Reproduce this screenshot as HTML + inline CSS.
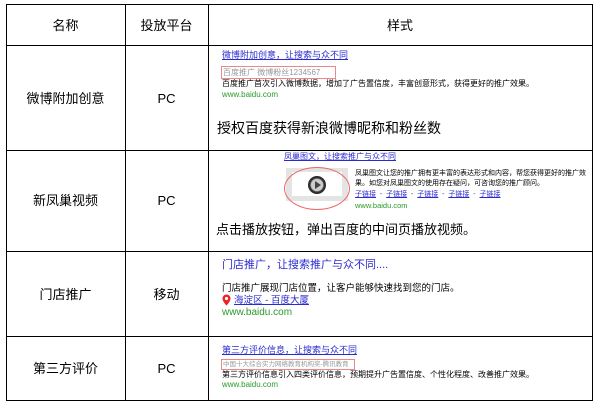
<!DOCTYPE html>
<html><head><meta charset="utf-8"><style>
*{margin:0;padding:0;box-sizing:border-box}
body{width:602px;height:407px;background:#fff;position:relative;overflow:hidden;font-family:"Liberation Sans","Noto Sans CJK SC",sans-serif;color:#000}
.h,.v{position:absolute;background:#000}
.h{height:1px;left:6px;width:587px}
.v{width:1px;top:4px;height:397px}
.t{position:absolute;white-space:nowrap;line-height:1}
.c{text-align:center}
.blue{color:#2a2ad0}
.s{font-size:8px}
.g{color:#2a9a2a}
.box{position:absolute;border:1px solid #e88;}
</style></head><body>
<div class="h" style="top:4px"></div>
<div class="h" style="top:45px"></div>
<div class="h" style="top:150px"></div>
<div class="h" style="top:251px"></div>
<div class="h" style="top:336px"></div>
<div class="h" style="top:400px"></div>
<div class="v" style="left:6px"></div>
<div class="v" style="left:125px"></div>
<div class="v" style="left:208px"></div>
<div class="v" style="left:592px"></div>

<div class="t c" style="left:6px;width:119px;top:19px;font-size:13px">名称</div>
<div class="t c" style="left:125px;width:83px;top:19px;font-size:13px">投放平台</div>
<div class="t c" style="left:208px;width:384px;top:19px;font-size:13px">样式</div>

<div class="t c" style="left:6px;width:119px;top:92px;font-size:13px">微博附加创意</div>
<div class="t c" style="left:125px;width:83px;top:92px;font-size:13px">PC</div>
<div class="t c" style="left:6px;width:119px;top:194px;font-size:13px">新凤巢视频</div>
<div class="t c" style="left:125px;width:83px;top:194px;font-size:13px">PC</div>
<div class="t c" style="left:6px;width:119px;top:288px;font-size:13px">门店推广</div>
<div class="t c" style="left:125px;width:83px;top:288px;font-size:13px">移动</div>
<div class="t c" style="left:6px;width:119px;top:362px;font-size:13px">第三方评价</div>
<div class="t c" style="left:125px;width:83px;top:362px;font-size:13px">PC</div>

<!-- row1 -->
<div class="t blue s" style="left:222px;top:51px;text-decoration:underline;font-size:9px">微博附加创意，让搜索与众不同</div>
<div class="box" style="left:221px;top:66px;width:115px;height:13px"></div>
<div class="t s" style="left:223px;top:69px;color:#999">百度推广 微博粉丝1234567</div>
<div class="t s" style="left:222px;top:80px">百度推广首次引入微博数据，增加了广告置信度，丰富创意形式，获得更好的推广效果。</div>
<div class="t s g" style="left:222px;top:91px">www.baidu.com</div>
<div class="t" style="left:217px;top:121px;font-size:14px">授权百度获得新浪微博昵称和粉丝数</div>

<!-- row2 -->
<div class="t blue s" style="left:284px;top:153px;text-decoration:underline">凤巢图文，让搜索推广与众不同</div>
<div style="position:absolute;left:286px;top:168px;width:62px;height:33px;background:#e4e4e4"></div>
<div style="position:absolute;left:292px;top:172px;width:50px;height:24px;background:#fff"></div>
<div style="position:absolute;left:284px;top:167px;width:66px;height:43px;border:1px solid #e66;border-radius:50%"></div>
<div style="position:absolute;left:308px;top:176px;width:18px;height:18px;border-radius:50%;background:radial-gradient(circle,#ccc 0 45%,#333 55%,#111)"></div>
<div style="position:absolute;left:315px;top:181px;width:0;height:0;border-left:6px solid #444;border-top:4px solid transparent;border-bottom:4px solid transparent"></div>
<div class="t" style="left:355px;top:170px;font-size:7px">凤巢图文让您的推广拥有更丰富的表达形式和内容，帮您获得更好的推广效</div>
<div class="t" style="left:355px;top:180px;font-size:7px">果。如您对凤巢图文的使用存在疑问，可咨询您的推广顾问。</div>
<div class="t blue" style="left:355px;top:191px;font-size:7px"><u>子链接</u> &nbsp;- &nbsp;<u>子链接</u> &nbsp;- &nbsp;<u>子链接</u> &nbsp;- &nbsp;<u>子链接</u> &nbsp;- &nbsp;<u>子链接</u></div>
<div class="t g" style="left:355px;top:202px;font-size:7.5px">www.baidu.com</div>
<div class="t" style="left:216px;top:223px;font-size:13px">点击播放按钮，弹出百度的中间页播放视频。</div>

<!-- row3 -->
<div class="t blue" style="left:222px;top:260px;font-size:11px">门店推广，让搜索推广与众不同....</div>
<div class="t" style="left:222px;top:284px;font-size:9.5px">门店推广展现门店位置，让客户能够快速找到您的门店。</div>
<svg style="position:absolute;left:222px;top:294px" width="9" height="12" viewBox="0 0 9 12"><path d="M4.5 0.5A4 4 0 0 0 0.5 4.5C0.5 7.5 4.5 11.5 4.5 11.5S8.5 7.5 8.5 4.5A4 4 0 0 0 4.5 0.5Z" fill="#e22"/><circle cx="4.5" cy="4.5" r="1.6" fill="#fff"/></svg>
<div class="t blue" style="left:234px;top:296px;font-size:9.5px;text-decoration:underline">海淀区 - 百度大厦</div>
<div class="t g" style="left:222px;top:308px;font-size:10px">www.baidu.com</div>

<!-- row4 -->
<div class="t blue s" style="left:222px;top:346px;text-decoration:underline;font-size:9px">第三方评价信息，让搜索与众不同</div>
<div class="box" style="left:221px;top:359px;width:134px;height:11px"></div>
<div class="t" style="left:223px;top:362px;color:#999;font-size:6.5px">中国十大综合实力网络教育机构奖-腾讯教育</div>
<div class="t s" style="left:222px;top:371px">第三方评价信息引入四类评价信息，预期提升广告置信度、个性化程度、改善推广效果。</div>
<div class="t s g" style="left:222px;top:381px">www.baidu.com</div>
</body></html>
